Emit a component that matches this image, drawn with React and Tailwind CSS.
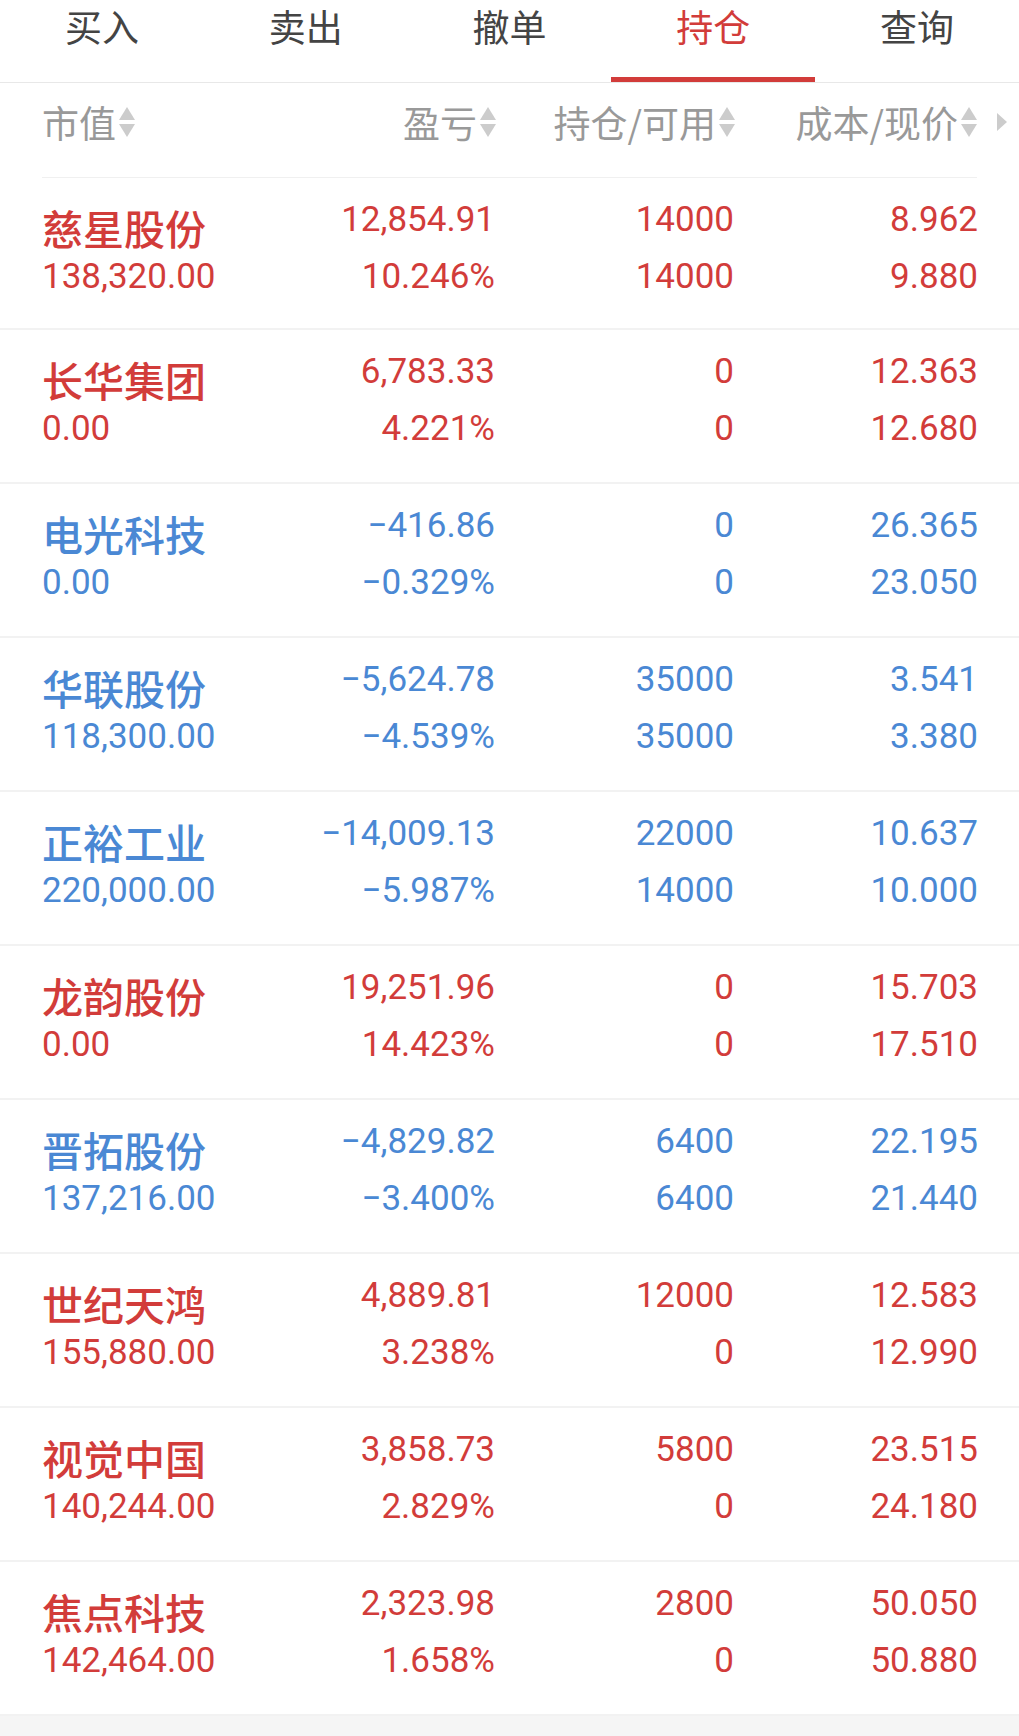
import React from 'react'

const RED = 'text-[#d23c3a]'
const BLUE = 'text-[#4a88d4]'

const tabs = ['买入', '卖出', '撤单', '持仓', '查询']

const rows = [
  { name: '慈星股份', up: true, mv: '138,320.00', pl: '12,854.91', pct: '10.246%', pos: '14000', avail: '14000', cost: '8.962', price: '9.880' },
  { name: '长华集团', up: true, mv: '0.00', pl: '6,783.33', pct: '4.221%', pos: '0', avail: '0', cost: '12.363', price: '12.680' },
  { name: '电光科技', up: false, mv: '0.00', pl: '−416.86', pct: '−0.329%', pos: '0', avail: '0', cost: '26.365', price: '23.050' },
  { name: '华联股份', up: false, mv: '118,300.00', pl: '−5,624.78', pct: '−4.539%', pos: '35000', avail: '35000', cost: '3.541', price: '3.380' },
  { name: '正裕工业', up: false, mv: '220,000.00', pl: '−14,009.13', pct: '−5.987%', pos: '22000', avail: '14000', cost: '10.637', price: '10.000' },
  { name: '龙韵股份', up: true, mv: '0.00', pl: '19,251.96', pct: '14.423%', pos: '0', avail: '0', cost: '15.703', price: '17.510' },
  { name: '晋拓股份', up: false, mv: '137,216.00', pl: '−4,829.82', pct: '−3.400%', pos: '6400', avail: '6400', cost: '22.195', price: '21.440' },
  { name: '世纪天鸿', up: true, mv: '155,880.00', pl: '4,889.81', pct: '3.238%', pos: '12000', avail: '0', cost: '12.583', price: '12.990' },
  { name: '视觉中国', up: true, mv: '140,244.00', pl: '3,858.73', pct: '2.829%', pos: '5800', avail: '0', cost: '23.515', price: '24.180' },
  { name: '焦点科技', up: true, mv: '142,464.00', pl: '2,323.98', pct: '1.658%', pos: '2800', avail: '0', cost: '50.050', price: '50.880' },
]

const cjk = "font-['Noto_Sans_CJK_SC',sans-serif]"
const num = "font-['Roboto','Noto_Sans_CJK_SC',sans-serif]"

const SortArrows = () => (
  <svg width="18" height="32" viewBox="0 0 18 32" className="ml-[2px] shrink-0">
    <path d="M9 1 L17 14 L1 14 Z" fill="#cccccc" />
    <path d="M1 18 L17 18 L9 31 Z" fill="#cccccc" />
  </svg>
)

const HeadCell = ({ label, right }) => (
  <div className={`flex items-center h-[44px] ${right ? 'justify-end' : 'justify-start'}`}>
    <span className={`${cjk} text-[37px] leading-[44px] text-[#999999]`}>{label}</span>
    <SortArrows />
  </div>
)

const NumCell = ({ top, bottom, color }) => (
  <div className={`flex flex-col items-end ${num} ${color} text-[35px]`}>
    <div className="h-[57px] leading-[56px]">{top}</div>
    <div className="h-[57px] leading-[56px]">{bottom}</div>
  </div>
)

const App = () => {
  return (
    <div className="w-full min-h-[1736px] bg-[#f5f5f5]">
      <div className="bg-white">
        <div className="flex h-[83px] border-b border-[#e8e8e8]">
          {tabs.map((t, i) => (
            <div key={t} className="relative flex-1 flex justify-center pt-[3px]">
              <span className={`${cjk} text-[37px] leading-[46px] ${i === 3 ? 'text-[#d23c3a]' : 'text-[#444444]'}`}>{t}</span>
              {i === 3 && <div className="absolute left-0 right-0 bottom-0 h-[5px] bg-[#d23c3a]" />}
            </div>
          ))}
        </div>

        <div className="relative">
          <div className="mx-[42px] h-[95px] pt-[17px] border-b border-[#f0f0f0] grid content-start items-start grid-cols-[253px_202px_239px_242px]">
            <HeadCell label="市值" />
            <HeadCell label="盈亏" right />
            <HeadCell label="持仓/可用" right />
            <HeadCell label="成本/现价" right />
          </div>
          <svg width="12" height="20" viewBox="0 0 12 20" className="absolute right-[11px] top-[29px]">
            <path d="M1 1 L11 10 L1 19 Z" fill="#cccccc" />
          </svg>
        </div>

        {rows.map((r, i) => {
          const color = r.up ? RED : BLUE
          return (
            <div key={r.name} className={`${i === 0 ? 'h-[152px]' : 'h-[154px]'} border-b-2 border-[#f2f2f2] px-[42px] pt-[14px] grid content-start grid-cols-[253px_200px_239px_244px]`}>
              <div className={`flex flex-col ${color}`}>
                <div className={`h-[57px] leading-[70px] ${cjk} text-[41px] font-medium whitespace-nowrap`}>{r.name}</div>
                <div className={`h-[57px] leading-[56px] ${num} text-[35px]`}>{r.mv}</div>
              </div>
              <NumCell top={r.pl} bottom={r.pct} color={color} />
              <NumCell top={r.pos} bottom={r.avail} color={color} />
              <NumCell top={r.cost} bottom={r.price} color={color} />
            </div>
          )
        })}
      </div>
    </div>
  )
}

export default App
